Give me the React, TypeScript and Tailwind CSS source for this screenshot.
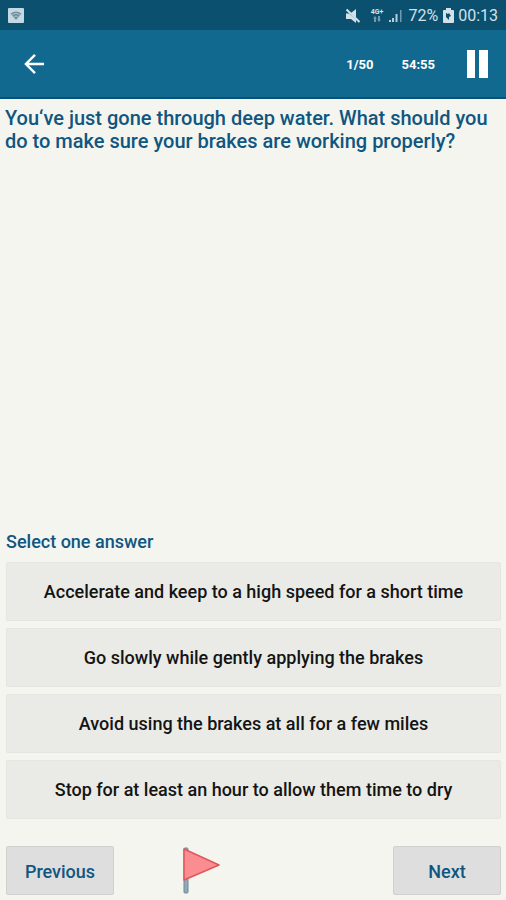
import { useState } from 'react';

const answers = [
  'Accelerate and keep to a high speed for a short time',
  'Go slowly while gently applying the brakes',
  'Avoid using the brakes at all for a few miles',
  'Stop for at least an hour to allow them time to dry',
];

function StatusBar() {
  return (
    <div className="flex h-[30px] items-center justify-between bg-[#0b506e] px-2 pt-px text-[#d3e2ea]">
      <svg width="16" height="16" viewBox="0 0 16 16">
        <rect x="0" y="0" width="16" height="15" rx="1" fill="#c3d8e3" />
        <path d="M2.5 5.5Q8 1.5 13.5 5.5L8 12z" fill="#7393a4" />
        <path d="M4 6.5Q8 4 12 6.5M6 8.7Q8 7.4 10 8.7" fill="none" stroke="#a3bccb" strokeWidth="1" />
      </svg>
      <div className="flex items-center">
        <svg width="16" height="16" viewBox="0 0 16 16" fill="currentColor">
          <path d="M1 5.5h3L11 11.5V15L6 11H1z" />
          <path d="M6 5L11 1v8.5z" />
          <path d="M1.5 1.5L14.5 14" stroke="currentColor" strokeWidth="2" />
        </svg>
        <div className="ml-2 flex w-[15px] flex-col items-center">
          <span className="text-[7px] leading-[7px] font-bold">4G+</span>
          <svg width="10" height="6" viewBox="0 0 10 6" fill="#6f9bb0">
            <path d="M3 0l2 2.5H4V6H2V2.5H1zM7 6L5 3.5h1V0h2v3.5h1z" />
          </svg>
        </div>
        <svg className="ml-1" width="16" height="15" viewBox="0 0 16 15">
          <path d="M1 12h2v2H1zM4 10h2v4H4z" fill="#b4cdd9" />
          <path d="M7.5 6h2v8h-2z" fill="#b4cdd9" />
          <path d="M12 2h1.5v12H12z" fill="#6f9bb0" />
        </svg>
        <span className="ml-1 text-base leading-5">72%</span>
        <svg className="ml-[5px]" width="11" height="15" viewBox="0 0 11 15">
          <path d="M3 0h5v2h2q1 0 1 1v11q0 1-1 1H1q-1 0-1-1V3q0-1 1-1h2z" fill="#d3e2ea" />
          <path d="M3 5l2 1 1-1 2 3-2 1v3L3 9z" fill="#0b506e" />
        </svg>
        <span className="ml-1 text-base leading-5">00:13</span>
      </div>
    </div>
  );
}

export default function App() {
  const [selected, setSelected] = useState<number | null>(null);

  return (
    <main className="flex min-h-screen flex-col bg-[#f4f5ef] font-['Roboto',sans-serif]">
      <StatusBar />

      <header className="flex h-[69px] items-center border-b-2 border-[#0b5279] bg-[#126990] pr-[18px] pl-6 text-white">
        <button aria-label="Back">
          <svg width="21" height="22" viewBox="0 0 22 22" fill="none" stroke="currentColor" strokeWidth="2.5">
            <path d="M21 11H2.5M11.5 1.5L2 11l9.5 9.5" />
          </svg>
        </button>
        <span className="ml-auto pt-[2px] text-[13px] font-bold">1/50</span>
        <span className="ml-7 pt-[2px] text-[13px] font-bold">54:55</span>
        <button aria-label="Pause" className="ml-8">
          <svg width="21" height="28" viewBox="0 0 21 28" fill="currentColor">
            <rect x="0" y="0" width="8" height="28" />
            <rect x="12" y="0" width="9" height="28" />
          </svg>
        </button>
      </header>

      <h1 className="px-[5px] pt-2 text-xl leading-[23px] font-medium text-[#105680]">
        You‘ve just gone through deep water. What should you do to make sure your brakes are working properly?
      </h1>

      <section className="mt-auto pr-[5px] pl-[6px]">
        <h2 className="mb-2 text-lg leading-6 font-medium text-[#105680]">Select one answer</h2>
        <div className="flex flex-col gap-[7px]">
          {answers.map((answer, i) => (
            <button
              key={answer}
              onClick={() => setSelected(i)}
              aria-pressed={selected === i}
              className="h-[59px] rounded-xs border border-[#e5e6e2] bg-[#eaebe7] text-lg font-medium text-[#141414] aria-pressed:bg-[#d9e6ec]"
            >
              {answer}
            </button>
          ))}
        </div>
      </section>

      <footer className="mt-[27px] flex items-center justify-between pr-[5px] pb-[5px] pl-[6px] text-lg font-medium text-[#105680]">
        <button className="h-[49px] w-[108px] rounded-xs border border-[#cfd0cf] bg-[#dededf] pt-[2px]">Previous</button>
        <button aria-label="Flag question" className="mr-auto ml-[68px]">
          <svg width="40" height="49" viewBox="0 0 40 49">
            <rect x="2" y="2" width="4" height="45" rx="1" fill="#93a9b8" stroke="#6e8798" />
            <path d="M2 3v31L37 19z" fill="#fa8d8f" stroke="#e0565c" strokeWidth="1.5" strokeLinejoin="round" />
          </svg>
        </button>
        <button className="h-[49px] w-[108px] rounded-xs border border-[#cfd0cf] bg-[#dededf] pt-[2px]">Next</button>
      </footer>
    </main>
  );
}
